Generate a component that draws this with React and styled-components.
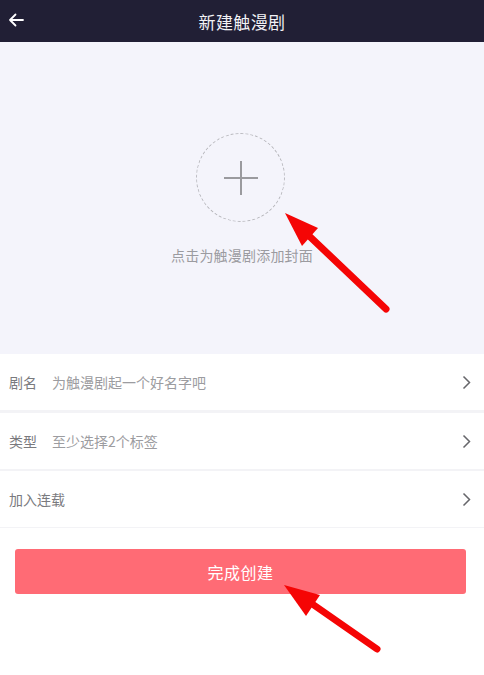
import React from "react";
import styled, { createGlobalStyle } from "styled-components";

const GlobalStyle = createGlobalStyle`
  body {
    margin: 0;
    background: #ffffff;
    font-family: "Noto Sans CJK SC", "Noto Sans", sans-serif;
  }
`;

const fields = [
  { label: "剧名", hint: "为触漫剧起一个好名字吧", gap: 3 },
  { label: "类型", hint: "至少选择2个标签", gap: 2 },
  { label: "加入连载", hint: "", gap: 1 },
];

const App = () => {
  return (
    <Page>
      <GlobalStyle />
      <Header>
        <BackButton>
          <svg width="16" height="14" viewBox="0 0 16 14" fill="none">
            <path
              d="M15 7H2M7.5 1.5L2 7l5.5 5.5"
              stroke="#ffffff"
              strokeWidth="1.8"
              strokeLinecap="round"
              strokeLinejoin="round"
            />
          </svg>
        </BackButton>
        <Title>新建触漫剧</Title>
      </Header>

      <Cover>
        <AddCircle>
          <svg width="36" height="36" viewBox="0 0 36 36">
            <path d="M18 1v34M1 18h34" stroke="#9a9a9e" strokeWidth="2" />
          </svg>
        </AddCircle>
        <CoverHint>点击为触漫剧添加封面</CoverHint>
      </Cover>

      <Form>
        {fields.map((f) => (
          <Row key={f.label} $gap={f.gap}>
            <Label>{f.label}</Label>
            {f.hint && <Hint>{f.hint}</Hint>}
            <Chevron>
              <svg width="9" height="15" viewBox="0 0 9 15" fill="none">
                <path d="M1.5 1.5L7.5 7.5l-6 6" stroke="#66666a" strokeWidth="1.5" />
              </svg>
            </Chevron>
          </Row>
        ))}
      </Form>

      <SubmitButton>完成创建</SubmitButton>

      {/* red pointer marks laid over the page */}
      <Marks width="484" height="675" viewBox="0 0 484 675">
        <path d="M386 309L305 232" stroke="#f50505" strokeWidth="7" strokeLinecap="round" />
        <polygon points="285,213 318,228 302,246" fill="#f50505" />
        <path d="M377 649L308 601" stroke="#f50505" strokeWidth="7" strokeLinecap="round" />
        <polygon points="284,585 320,595 306,616" fill="#f50505" />
      </Marks>
    </Page>
  );
};

const Page = styled.div`
  position: relative;
  width: 484px;
  min-height: 675px;
  background: #ffffff;
`;

const Header = styled.header`
  position: relative;
  height: 42px;
  background: #211f35;
  display: flex;
  align-items: center;
  justify-content: center;
`;

const BackButton = styled.div`
  position: absolute;
  left: 8px;
  top: 13px;
  display: flex;
`;

const Title = styled.h1`
  margin: 0;
  color: #f2f2f5;
  font-size: 17px;
  font-weight: 400;
  letter-spacing: 0.4px;
`;

const Cover = styled.section`
  height: 312px;
  box-sizing: border-box;
  padding-top: 91px;
  background: #f4f4fb;
  display: flex;
  flex-direction: column;
  align-items: center;
`;

const AddCircle = styled.div`
  width: 89px;
  height: 89px;
  box-sizing: border-box;
  border: 1px dashed #b8b8bd;
  border-radius: 50%;
  display: flex;
  align-items: center;
  justify-content: center;
  margin-right: 3px;
`;

const CoverHint = styled.p`
  margin: 23px 0 0;
  font-size: 14px;
  color: #9b9ba0;
  letter-spacing: 0.2px;
`;

const Form = styled.div`
  display: flex;
  flex-direction: column;
`;

const Row = styled.div`
  height: 56px;
  display: flex;
  align-items: center;
  padding: 0 13px 0 9px;
  border-bottom: ${(p) => p.$gap}px solid #f3f3f6;
  font-size: 14px;
`;

const Label = styled.span`
  color: #7a7a7e;
  margin-right: 15px;
`;

const Hint = styled.span`
  color: #9c9ca0;
`;

const Chevron = styled.span`
  margin-left: auto;
  display: flex;
`;

const SubmitButton = styled.button`
  display: block;
  width: 451px;
  height: 45px;
  margin: 21px 0 0 15px;
  border: none;
  border-radius: 3px;
  background: #ff6b75;
  color: #ffffff;
  font-family: inherit;
  font-size: 16px;
  letter-spacing: 0.5px;
`;

const Marks = styled.svg`
  position: absolute;
  left: 0;
  top: 0;
  pointer-events: none;
`;

export default App;
